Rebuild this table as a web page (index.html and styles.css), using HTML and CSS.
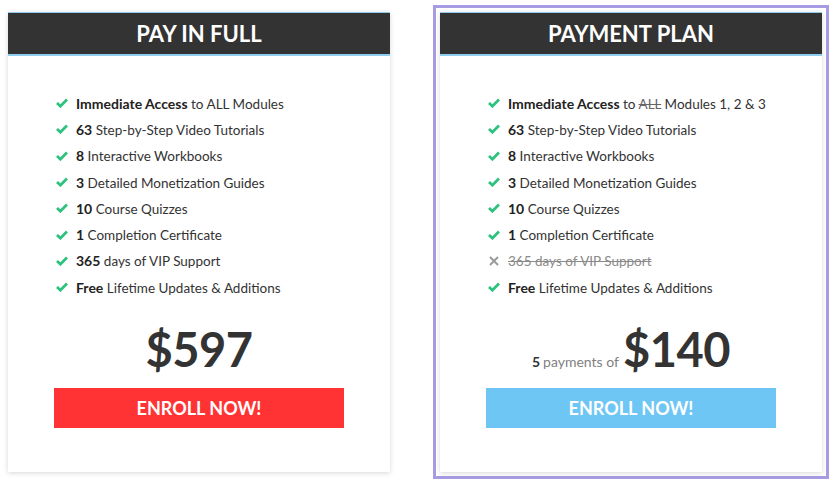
FILE: index.html
```html
<!DOCTYPE html>
<html>
<head>
<meta charset="utf-8">
<link rel="stylesheet" href="styles.css">
</head>
<body>
<div class="plans">
  <div class="wrap">
    <div class="card">
      <div class="head">PAY IN FULL</div>
      <ul class="features">
        <li><svg class="ic" viewBox="0 0 12 10"><path d="M1 5 L4.4 8.2 L11 1.6" /></svg><span><b>Immediate Access</b> to ALL Modules</span></li>
        <li><svg class="ic" viewBox="0 0 12 10"><path d="M1 5 L4.4 8.2 L11 1.6" /></svg><span><b>63</b> Step-by-Step Video Tutorials</span></li>
        <li><svg class="ic" viewBox="0 0 12 10"><path d="M1 5 L4.4 8.2 L11 1.6" /></svg><span><b>8</b> Interactive Workbooks</span></li>
        <li><svg class="ic" viewBox="0 0 12 10"><path d="M1 5 L4.4 8.2 L11 1.6" /></svg><span><b>3</b> Detailed Monetization Guides</span></li>
        <li><svg class="ic" viewBox="0 0 12 10"><path d="M1 5 L4.4 8.2 L11 1.6" /></svg><span><b>10</b> Course Quizzes</span></li>
        <li><svg class="ic" viewBox="0 0 12 10"><path d="M1 5 L4.4 8.2 L11 1.6" /></svg><span><b>1</b> Completion Certificate</span></li>
        <li><svg class="ic" viewBox="0 0 12 10"><path d="M1 5 L4.4 8.2 L11 1.6" /></svg><span><b>365</b> days of VIP Support</span></li>
        <li><svg class="ic" viewBox="0 0 12 10"><path d="M1 5 L4.4 8.2 L11 1.6" /></svg><span><b>Free</b> Lifetime Updates &amp; Additions</span></li>
      </ul>
      <div class="price"><span class="amount">$597</span></div>
      <a class="btn red">ENROLL NOW!</a>
    </div>
  </div>
  <div class="wrap featured">
    <div class="card">
      <div class="head">PAYMENT PLAN</div>
      <ul class="features">
        <li><svg class="ic" viewBox="0 0 12 10"><path d="M1 5 L4.4 8.2 L11 1.6" /></svg><span><b>Immediate Access</b> to <s>ALL</s> Modules 1, 2 &amp; 3</span></li>
        <li><svg class="ic" viewBox="0 0 12 10"><path d="M1 5 L4.4 8.2 L11 1.6" /></svg><span><b>63</b> Step-by-Step Video Tutorials</span></li>
        <li><svg class="ic" viewBox="0 0 12 10"><path d="M1 5 L4.4 8.2 L11 1.6" /></svg><span><b>8</b> Interactive Workbooks</span></li>
        <li><svg class="ic" viewBox="0 0 12 10"><path d="M1 5 L4.4 8.2 L11 1.6" /></svg><span><b>3</b> Detailed Monetization Guides</span></li>
        <li><svg class="ic" viewBox="0 0 12 10"><path d="M1 5 L4.4 8.2 L11 1.6" /></svg><span><b>10</b> Course Quizzes</span></li>
        <li><svg class="ic" viewBox="0 0 12 10"><path d="M1 5 L4.4 8.2 L11 1.6" /></svg><span><b>1</b> Completion Certificate</span></li>
        <li class="off"><svg class="ic x" viewBox="0 0 12 10"><path d="M2 1 L10 9 M10 1 L2 9" /></svg><span><s>365 days of VIP Support</s></span></li>
        <li><svg class="ic" viewBox="0 0 12 10"><path d="M1 5 L4.4 8.2 L11 1.6" /></svg><span><b>Free</b> Lifetime Updates &amp; Additions</span></li>
      </ul>
      <div class="price"><span class="count">5</span><span class="note">payments of</span><span class="amount">$140</span></div>
      <a class="btn blue">ENROLL NOW!</a>
    </div>
  </div>
</div>
</body>
</html>
```

FILE: styles.css
```css
* { box-sizing: border-box; }
html, body { margin: 0; padding: 0; background: #fff; }
body {
  font-family: Lato, "Open Sans", "Liberation Sans", sans-serif;
  color: #333;
}
.plans {
  display: flex;
  gap: 36px;
  padding: 5px 0 0 1px;
}
.wrap {
  width: 396px;
  padding: 4px;
  border: 3px solid transparent;
}
.wrap.featured { border-color: #a89be3; }
.card {
  background: #fff;
  box-shadow: 0 1px 5px rgba(0,0,0,0.16);
  height: 460px;
  display: flex;
  flex-direction: column;
  align-items: center;
}
.head {
  align-self: stretch;
  height: 44px;
  background: #333333;
  border-top: 1px solid #8fcdee;
  border-bottom: 2px solid #8fcdee;
  color: #fff;
  font-weight: 700;
  font-size: 22px;
  line-height: 42px;
  text-align: center;
}
.features {
  list-style: none;
  margin: 0;
  padding: 34px 0 0 48px;
  align-self: stretch;
}
.features li {
  display: flex;
  align-items: center;
  height: 26.3px;
  font-size: 13.5px;
  color: #333;
}
.features b { font-weight: 700; color: #222; font-size: 14px; }
.ic {
  width: 12px;
  height: 10px;
  margin-right: 8px;
  flex: none;
}
.ic path {
  fill: none;
  stroke: #2ec27e;
  stroke-width: 2.8;
  stroke-linecap: butt;
  stroke-linejoin: miter;
}
.ic.x path { stroke: #9a9a9a; stroke-width: 2; }
.off { color: #888 !important; }
s { color: #666; }
.off s { color: #8a8a8a; }
.price {
  margin-top: 19px;
  height: 60px;
  line-height: 60px;
  white-space: nowrap;
}
.amount {
  font-size: 47px;
  font-weight: 700;
  letter-spacing: -0.5px;
  color: #333;
}
.count {
  font-size: 14px;
  font-weight: 700;
  color: #333;
  margin-right: 3px;
}
.note {
  font-size: 14px;
  font-weight: 400;
  color: #808080;
  margin-right: 4px;
}
.btn {
  display: block;
  margin-top: 9px;
  width: 290px;
  height: 40px;
  line-height: 40px;
  text-align: center;
  color: #fff;
  font-weight: 700;
  font-size: 18px;
}
.btn.red { background: #ff3333; }
.btn.blue { background: #6ec6f4; }
```
